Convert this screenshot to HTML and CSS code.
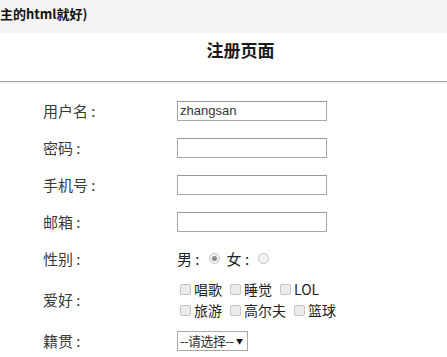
FILE: index.html
```html
<!DOCTYPE html>
<html lang="zh-CN">
  <head>
    <meta charset="UTF-8" />
    <meta name="viewport" content="width=device-width, initial-scale=1.0" />
    <title>注册页面</title>
    <link rel="stylesheet" href="styles.css">
  </head>

  <body>
    <div class="topbar">
      <span class="topbar__text">主的html就好)</span>
    </div>

    <div class="page">
      <h2 class="title">注册页面</h2>
      <hr class="divider" />

      <form class="reg">
        <div class="row">
          <label class="row__label" for="username">用户名 :</label>
          <input class="text-input" type="text" id="username" value="zhangsan" />
        </div>
        <div class="row">
          <label class="row__label" for="pwd">密码 :</label>
          <input class="text-input" type="password" id="pwd" />
        </div>
        <div class="row">
          <label class="row__label" for="phone">手机号 :</label>
          <input class="text-input" type="text" id="phone" />
        </div>
        <div class="row">
          <label class="row__label" for="mail">邮箱 :</label>
          <input class="text-input" type="text" id="mail" />
        </div>
        <div class="row">
          <span class="row__label">性别 :</span>
          <div class="gender">
            <span>男 :</span><input class="radio" type="radio" name="sex" checked />
            <span class="gender__second">女 :</span><input class="radio" type="radio" name="sex" />
          </div>
        </div>
        <div class="row row--tall">
          <span class="row__label">爱好 :</span>
          <div class="hobbies">
            <div class="hobbies__line">
              <label class="hobby"><input class="check" type="checkbox" />唱歌</label>
              <label class="hobby"><input class="check" type="checkbox" />睡觉</label>
              <label class="hobby"><input class="check" type="checkbox" />LOL</label>
            </div>
            <div class="hobbies__line">
              <label class="hobby"><input class="check" type="checkbox" />旅游</label>
              <label class="hobby"><input class="check" type="checkbox" />高尔夫</label>
              <label class="hobby"><input class="check" type="checkbox" />篮球</label>
            </div>
          </div>
        </div>
        <div class="row">
          <label class="row__label" for="city">籍贯 :</label>
          <div class="select" id="city">
            <span class="select__text">--请选择--</span>
            <span class="select__arrow">▼</span>
          </div>
        </div>
      </form>
    </div>
  </body>
</html>
```

FILE: styles.css
```css
/* reset */
html {
  box-sizing: border-box;
}

*,
*:before,
*:after {
  box-sizing: inherit;
}

body,
h2,
hr {
  margin: 0;
  padding: 0;
}

body {
  background: #fff;
  font-family: "Noto Sans CJK SC", "Liberation Sans", sans-serif;
  color: #333;
  overflow: hidden;
}

/* grey strip at the top */
.topbar {
  height: 33px;
  background: #f3f3f3;
  overflow: hidden;
  white-space: nowrap;
}

.topbar__text {
  display: inline-block;
  padding-top: 3px;
  font-size: 13px;
  line-height: 18px;
  font-weight: bold;
  color: #111;
}

.title {
  margin-top: 7px;
  padding-left: 34px;
  text-align: center;
  font-size: 17px;
  line-height: 20px;
  font-weight: bold;
  color: #1a1a1a;
}

.divider {
  margin-top: 21px;
  height: 2px;
  border: 0;
  border-top: 1px solid #a3a3a3;
  border-bottom: 1px solid #ececec;
}

.reg {
  padding-top: 9px;
}

.row {
  display: flex;
  align-items: center;
  height: 37px;
}

.row--tall {
  height: 45px;
}

.row__label {
  width: 177px;
  padding-left: 43px;
  font-size: 15px;
  line-height: 20px;
  color: #3a3a3a;
}

.text-input {
  width: 150px;
  height: 20px;
  margin: 0;
  padding: 0 2px;
  border: 1px solid #a9a9a9;
  border-top-color: #999;
  font-family: "Liberation Sans", sans-serif;
  font-size: 13px;
  color: #333;
  outline: none;
}

/* radios */
.gender {
  display: flex;
  align-items: center;
  font-size: 15px;
  line-height: 20px;
  color: #222;
}

.gender__second {
  margin-left: 7px;
}

.radio {
  appearance: none;
  -webkit-appearance: none;
  width: 11px;
  height: 11px;
  margin: 0 0 0 9px;
  border: 1px solid #c4c4c4;
  border-radius: 50%;
  background: #f2f2f2;
  position: relative;
}

.radio:checked:after {
  content: "";
  position: absolute;
  left: 2px;
  top: 2px;
  width: 5px;
  height: 5px;
  border-radius: 50%;
  background: #8a8a8a;
}

/* checkboxes */
.hobbies {
  font-size: 14px;
  line-height: 21px;
  color: #222;
}

.hobbies__line {
  display: flex;
  align-items: center;
}

.hobby {
  display: flex;
  align-items: center;
  margin-right: 5px;
}

.check {
  appearance: none;
  -webkit-appearance: none;
  width: 11px;
  height: 11px;
  margin: 0 3px 0 3px;
  border: 1px solid #c4c4c4;
  border-radius: 2px;
  background: #ececec;
}

/* fake select */
.select {
  display: flex;
  align-items: center;
  width: 71px;
  height: 20px;
  padding: 0 4px 0 2px;
  border: 1px solid #a9a9a9;
  background: #fff;
  font-size: 13px;
  color: #333;
}

.select__text {
  flex: 1;
  line-height: 18px;
  letter-spacing: -0.5px;
}

.select__arrow {
  font-size: 7px;
  color: #111;
}
```
